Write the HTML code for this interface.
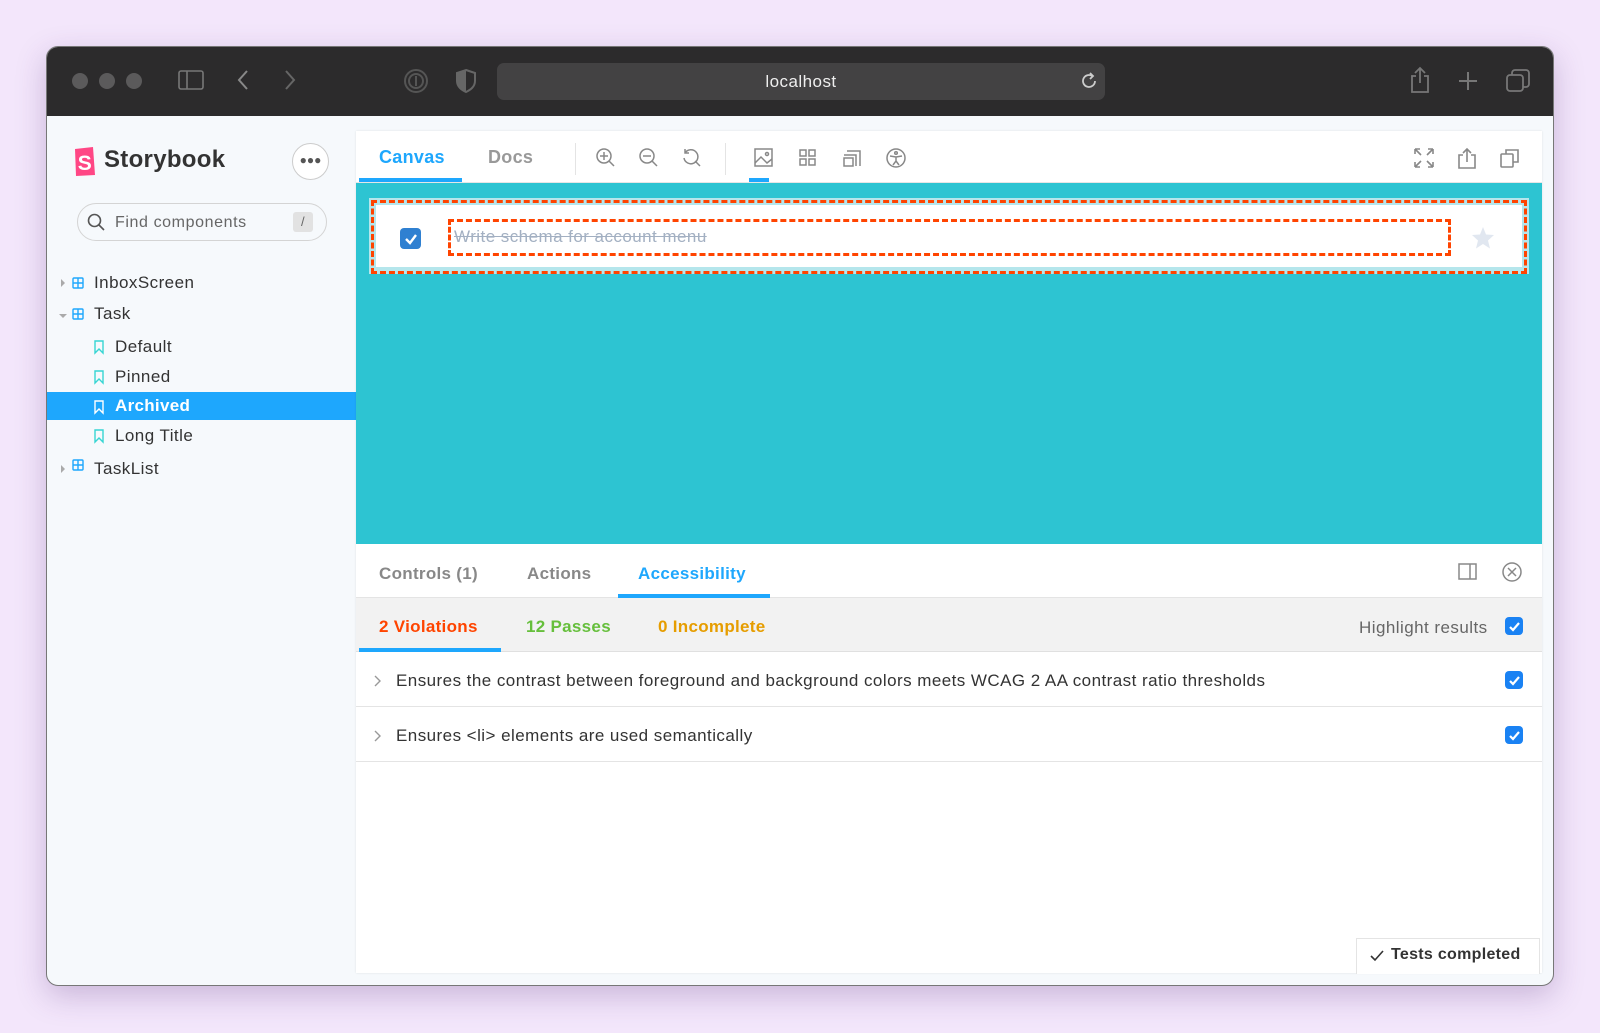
<!DOCTYPE html>
<html><head><meta charset="utf-8"><style>
*{box-sizing:border-box;margin:0;padding:0}
body{width:1600px;height:1033px;background:#f3e6fb;font-family:"Liberation Sans",sans-serif;position:relative;overflow:hidden;letter-spacing:.45px}
.a{position:absolute}
.win{left:46px;top:46px;width:1508px;height:940px;border-radius:12px;background:#f6f9fc;overflow:hidden;box-shadow:0 10px 30px rgba(80,40,120,.25);border:1px solid #777}
.tb{left:0;top:0;width:100%;height:69px;background:#2c2b2c}
.dot{width:16px;height:16px;border-radius:50%;background:#5b5a5b;top:26px}
.side{color:#333;font-size:17px}
.t{color:#333;font-size:17px}
.cb{width:18px;height:18px;border-radius:4px;background:#1a82f3;display:flex;align-items:center;justify-content:center}
svg{display:block}
b,.bold{letter-spacing:.3px}
</style></head><body>
<div class="a win">
 <div class="a tb">
  <div class="a dot" style="left:25px"></div><div class="a dot" style="left:52px"></div><div class="a dot" style="left:79px"></div>
  <svg class="a" style="left:131px;top:23px" width="26" height="20"><rect x="1" y="1" width="24" height="18" rx="2" fill="none" stroke="#777" stroke-width="1.6"/><line x1="9" y1="1" x2="9" y2="19" stroke="#777" stroke-width="1.6"/></svg>
  <svg class="a" style="left:189px;top:22px" width="14" height="22"><path d="M11 2 L3 11 L11 20" fill="none" stroke="#888" stroke-width="2"/></svg>
  <svg class="a" style="left:236px;top:22px" width="14" height="22"><path d="M3 2 L11 11 L3 20" fill="none" stroke="#666" stroke-width="2"/></svg>
  <svg class="a" style="left:356px;top:21px" width="26" height="26"><circle cx="13" cy="13" r="11" fill="none" stroke="#555" stroke-width="2"/><circle cx="13" cy="13" r="7" fill="none" stroke="#555" stroke-width="2"/><line x1="13" y1="8" x2="13" y2="18" stroke="#555" stroke-width="2"/></svg>
  <svg class="a" style="left:408px;top:21px" width="22" height="26"><path d="M11 2 L20 5 V13 C20 19 15 22 11 24 C7 22 2 19 2 13 V5 Z" fill="none" stroke="#666" stroke-width="2"/><path d="M11 2 V24 C7 22 2 19 2 13 V5 Z" fill="#666"/></svg>
  <div class="a" style="left:450px;top:16px;width:608px;height:37px;background:#434243;border-radius:7px;color:#eee;font-size:17px;text-align:center;line-height:37px">localhost</div>
  <svg class="a" style="left:1033px;top:25px" width="18" height="18"><path d="M15 9 A6 6 0 1 1 12 3.8" fill="none" stroke="#ccc" stroke-width="1.8"/><path d="M10 1 L13 4 L10 7" fill="none" stroke="#ccc" stroke-width="1.8"/></svg>
  <svg class="a" style="left:1362px;top:19px" width="22" height="28"><path d="M7 10 H3 V26 H19 V10 H15 M11 2 V17 M6 7 L11 2 L16 7" fill="none" stroke="#777" stroke-width="1.8"/></svg>
  <svg class="a" style="left:1411px;top:24px" width="20" height="20"><path d="M10 1 V19 M1 10 H19" stroke="#777" stroke-width="2"/></svg>
  <svg class="a" style="left:1459px;top:22px" width="24" height="24"><rect x="1" y="6" width="16" height="16" rx="3" fill="none" stroke="#777" stroke-width="1.8"/><path d="M6 6 V4 a3 3 0 0 1 3 -3 H20 a3 3 0 0 1 3 3 V15 a3 3 0 0 1 -3 3 H17" fill="none" stroke="#777" stroke-width="1.8"/></svg>
 </div>

 <svg class="a" style="left:26px;top:99px" width="24" height="31"><path d="M2 3 L20 1 L22 29 L3 30 Z" fill="#ff4785"/><text x="12" y="24" font-family="Liberation Sans" font-weight="bold" font-size="21" fill="#fff" text-anchor="middle">S</text></svg>
 <div class="a bold" style="left:57px;top:99px;font-size:24px;font-weight:bold;color:#333">Storybook</div>
 <div class="a" style="left:245px;top:96px;width:37px;height:37px;border-radius:50%;border:1px solid #ccc;background:#fff;text-align:center;line-height:32px;font-size:12px;color:#555;font-weight:bold;letter-spacing:0">●●●</div>
 <div class="a" style="left:30px;top:156px;width:250px;height:38px;border-radius:19px;border:1px solid #d4d4d4;background:#f6f9fc"></div>
 <svg class="a" style="left:40px;top:166px" width="18" height="18"><circle cx="7.5" cy="7.5" r="6" fill="none" stroke="#555" stroke-width="1.6"/><line x1="12" y1="12" x2="17" y2="17" stroke="#555" stroke-width="1.6"/></svg>
 <div class="a" style="left:68px;top:167px;font-size:16px;color:#666;letter-spacing:.6px">Find components</div>
 <div class="a" style="left:246px;top:165px;width:20px;height:20px;background:#e2e2e2;border-radius:3px;text-align:center;font-size:13px;line-height:20px;color:#666">/</div>

 <div class="a" style="left:0;top:345px;width:309px;height:28px;background:#1ea7fd"></div>
 <svg class="a" style="left:10px;top:227px" width="300" height="220">
  <path d="M4 5 L8 9 L4 13Z" fill="#aaa"/>
  <path d="M2 40 L10 40 L6 44Z" fill="#aaa"/>
  <path d="M4 191 L8 195 L4 199Z" fill="#aaa"/>
  <g fill="none" stroke="#1ea7fd" stroke-width="1.4">
   <rect x="16" y="4" width="10" height="10" rx="1"/><path d="M21 4V14M16 9H26"/>
   <rect x="16" y="35" width="10" height="10" rx="1"/><path d="M21 35V45M16 40H26"/>
   <rect x="16" y="186" width="10" height="10" rx="1"/><path d="M21 186V196M16 191H26"/>
  </g>
  <g fill="none" stroke="#37d5d3" stroke-width="1.4">
   <path d="M38 67 H46 V79 L42 75 L38 79Z"/><path d="M38 97 H46 V109 L42 105 L38 109Z"/><path d="M38 156 H46 V168 L42 164 L38 168Z"/>
  </g>
  <path d="M38 127 H46 V139 L42 135 L38 139Z" fill="none" stroke="#fff" stroke-width="1.4"/>
 </svg>
 <div class="a side" style="left:47px;top:226px">InboxScreen</div>
 <div class="a side" style="left:47px;top:257px">Task</div>
 <div class="a side" style="left:68px;top:290px">Default</div>
 <div class="a side" style="left:68px;top:320px">Pinned</div>
 <div class="a side bold" style="left:68px;top:349px;color:#fff;font-weight:bold">Archived</div>
 <div class="a side" style="left:68px;top:379px">Long Title</div>
 <div class="a side" style="left:47px;top:412px">TaskList</div>

 <div class="a" style="left:309px;top:84px;width:1186px;height:842px;background:#fff;box-shadow:0 0 2px rgba(0,0,0,.1)"></div>
 <div class="a" style="left:309px;top:135px;width:1186px;height:1px;background:#e6e6e6"></div>
 <div class="a bold" style="left:332px;top:100px;font-size:18px;font-weight:bold;color:#1ea7fd">Canvas</div>
 <div class="a" style="left:312px;top:131px;width:103px;height:4px;background:#1ea7fd"></div>
 <div class="a bold" style="left:441px;top:100px;font-size:18px;font-weight:bold;color:#999">Docs</div>
 <div class="a" style="left:528px;top:96px;width:1px;height:32px;background:#e4e4e4"></div>
 <div class="a" style="left:678px;top:96px;width:1px;height:32px;background:#e4e4e4"></div>
 <svg class="a" style="left:548px;top:100px" width="360" height="24" fill="none" stroke="#888" stroke-width="1.5">
  <circle cx="9" cy="9" r="7"/><path d="M14 14 L19 19 M9 5V13 M5 9H13"/>
  <circle cx="52" cy="9" r="7"/><path d="M57 14 L62 19 M48 9H56"/>
  <path d="M90 6 A7 7 0 1 1 89 11 M90 2V6H94"/><path d="M100 14 L105 19"/>
  <rect x="160" y="2" width="17" height="17"/><path d="M160 16 L166 10 L172 16 L177 12"/><circle cx="172" cy="7" r="1.5"/>
  <rect x="205" y="3" width="6" height="6"/><rect x="214" y="3" width="6" height="6"/><rect x="205" y="12" width="6" height="6"/><rect x="214" y="12" width="6" height="6"/>
  <path d="M252 4H265V19 M249 8H261V19 M249 11H258V19H249Z"/>
  <circle cx="301" cy="11" r="9"/><circle cx="301" cy="6" r="1.3"/><path d="M295 9 L301 10 L307 9 M301 10V14 L298 18 M301 14 L304 18"/>
 </svg>
 <div class="a" style="left:702px;top:131px;width:20px;height:4px;background:#1ea7fd"></div>
 <svg class="a" style="left:1366px;top:100px" width="140" height="24" fill="none" stroke="#888" stroke-width="1.6">
  <path d="M2 2 L8 8 M2 2H7 M2 2V7 M20 2 L14 8 M20 2H15 M20 2V7 M2 20 L8 14 M2 20H7 M2 20V15 M20 20 L14 14 M20 20H15 M20 20V15"/>
  <path d="M50 8H46V21H62V8H58 M54 2V15 M50 6 L54 2 L58 6"/>
  <rect x="88" y="7" width="12" height="13" rx="1"/><path d="M93 7V3H105V15H100"/>
 </svg>

 <div class="a" style="left:309px;top:136px;width:1186px;height:361px;background:#2dc4d2"></div>
 <div class="a" style="left:322px;top:151px;width:1160px;height:76px;background:#b5e6ec"></div>
 <div class="a" style="left:329px;top:158px;width:1146px;height:62px;background:#fff"></div>
 <div class="a" style="left:324px;top:153px;width:1156px;height:74px;border:3px dashed #ff4400"></div>
 <div class="a" style="left:401px;top:172px;width:1003px;height:37px;border:3px dashed #ff4400"></div>
 <div class="a cb" style="left:353px;top:181px;width:21px;height:21px;background:#2f80d1"><svg width="14" height="14"><path d="M2 7 L6 11 L12 3" fill="none" stroke="#fff" stroke-width="2.4"/></svg></div>
 <div class="a" style="left:407px;top:180px;font-size:17px;color:#a3b0c2;text-decoration:line-through">Write schema for account menu</div>
 <svg class="a" style="left:1424px;top:179px" width="24" height="24"><path d="M12 1 L15 8.5 L23 9 L17 14.5 L19 22.5 L12 18 L5 22.5 L7 14.5 L1 9 L9 8.5Z" fill="#e1e7f0"/></svg>

 <div class="a" style="left:309px;top:550px;width:1186px;height:1px;background:#e4e4e4"></div>
 <div class="a bold" style="left:332px;top:517px;font-size:17px;font-weight:bold;color:#888">Controls (1)</div>
 <div class="a bold" style="left:480px;top:517px;font-size:17px;font-weight:bold;color:#888">Actions</div>
 <div class="a bold" style="left:591px;top:517px;font-size:17px;font-weight:bold;color:#1ea7fd">Accessibility</div>
 <div class="a" style="left:571px;top:547px;width:152px;height:4px;background:#1ea7fd"></div>
 <svg class="a" style="left:1410px;top:514px" width="70" height="22" fill="none" stroke="#888" stroke-width="1.5"><rect x="2" y="3" width="17" height="15"/><path d="M13 3V18"/><circle cx="55" cy="11" r="9"/><path d="M51 7 L59 15 M59 7 L51 15"/></svg>

 <div class="a" style="left:309px;top:551px;width:1186px;height:54px;background:#f2f2f2;border-bottom:1px solid #e0e0e0"></div>
 <div class="a bold" style="left:332px;top:570px;font-size:17px;font-weight:bold;color:#ff4400">2 Violations</div>
 <div class="a" style="left:312px;top:601px;width:142px;height:4px;background:#1ea7fd"></div>
 <div class="a bold" style="left:479px;top:570px;font-size:17px;font-weight:bold;color:#66bf3c">12 Passes</div>
 <div class="a bold" style="left:611px;top:570px;font-size:17px;font-weight:bold;color:#e69d00">0 Incomplete</div>
 <div class="a" style="left:1312px;top:571px;font-size:17px;color:#666">Highlight results</div>
 <div class="a cb" style="left:1458px;top:570px"><svg width="13" height="13"><path d="M2 7 L5 10 L11 3" fill="none" stroke="#fff" stroke-width="2.2"/></svg></div>

 <div class="a" style="left:309px;top:659px;width:1186px;height:1px;background:#e4e4e4"></div>
 <div class="a" style="left:309px;top:714px;width:1186px;height:1px;background:#e4e4e4"></div>
 <svg class="a" style="left:325px;top:627px" width="10" height="70" fill="none" stroke="#999" stroke-width="1.4"><path d="M3 2 L8 7 L3 12 M3 57 L8 62 L3 67"/></svg>
 <div class="a t" style="left:349px;top:624px">Ensures the contrast between foreground and background colors meets WCAG 2 AA contrast ratio thresholds</div>
 <div class="a t" style="left:349px;top:679px">Ensures &lt;li&gt; elements are used semantically</div>
 <div class="a cb" style="left:1458px;top:624px"><svg width="13" height="13"><path d="M2 7 L5 10 L11 3" fill="none" stroke="#fff" stroke-width="2.2"/></svg></div>
 <div class="a cb" style="left:1458px;top:679px"><svg width="13" height="13"><path d="M2 7 L5 10 L11 3" fill="none" stroke="#fff" stroke-width="2.2"/></svg></div>

 <div class="a" style="left:1309px;top:891px;width:184px;height:36px;background:#fff;border:1px solid #e4e4e4;border-bottom:none"></div>
 <svg class="a" style="left:1322px;top:902px" width="16" height="14"><path d="M2 7 L6 11 L14 2" fill="none" stroke="#333" stroke-width="1.6"/></svg>
 <div class="a bold" style="left:1344px;top:899px;font-size:16px;font-weight:bold;color:#333">Tests completed</div>
</div>
</body></html>
